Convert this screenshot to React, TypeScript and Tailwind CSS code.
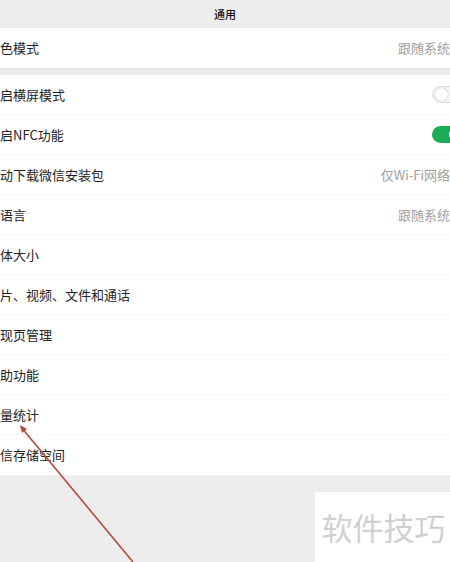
import React from "react";

const font = { fontFamily: '"Noto Sans CJK SC", "Noto Sans", sans-serif' };

const Toggle = ({ on }: { on: boolean }) => (
  <div
    className={`-mr-[14px] flex h-[17px] w-[32px] items-center rounded-full px-[2px] ${
      on ? "justify-end bg-[#1aad55]" : "justify-start border border-[#dcdcdc] bg-[#f3f3f3]"
    }`}
  >
    <div className={`h-[13px] w-[13px] rounded-full bg-white ${on ? "" : "shadow-[0_0_1px_#999]"}`} />
  </div>
);

const rows: { label: string; value?: string; toggle?: boolean }[] = [
  { label: "启横屏模式", toggle: false },
  { label: "启NFC功能", toggle: true },
  { label: "动下载微信安装包", value: "仅Wi-Fi网络" },
  { label: "语言", value: "跟随系统" },
  { label: "体大小" },
  { label: "片、视频、文件和通话" },
  { label: "现页管理" },
  { label: "助功能" },
  { label: "量统计" },
  { label: "信存储空间" },
];

export default function App() {
  return (
    <div className="relative h-[562px] w-[450px] overflow-hidden bg-[#ededed] text-[#222]" style={font}>
      <div className="flex h-[28px] items-center justify-center text-[11px] font-medium text-[#111]">通用</div>

      <div className="flex h-[41px] items-center justify-between border-b border-[#e4e4e4] bg-white text-[13px]">
        <span>色模式</span>
        <span className="whitespace-nowrap text-[13px] text-[#a0a0a0]">跟随系统</span>
      </div>

      <div className="mt-[6px] bg-white">
        {rows.map((r, i) => (
          <div
            key={i}
            className={`flex h-[40px] items-center justify-between text-[13px] ${
              i < rows.length - 1 ? "border-b border-[#f7f7f7]" : ""
            }`}
          >
            <span>{r.label}</span>
            {r.toggle !== undefined && <Toggle on={r.toggle} />}
            {r.value && <span className="whitespace-nowrap text-[13px] text-[#a0a0a0]">{r.value}</span>}
          </div>
        ))}
      </div>

      <div className="mt-[17px] flex justify-end">
        <div className="flex h-[70px] w-[135px] items-center justify-center bg-white pl-[2px] text-[31px] text-[#d0d0d0]">
          软件技巧
        </div>
      </div>

      {/* red arrow */}
      <svg className="absolute left-0 top-0" width="450" height="562">
        <line x1="21" y1="427" x2="133" y2="562" stroke="#b5483c" strokeWidth="1.6" />
        <path d="M20 425 L22 433 L27 429 Z" fill="#b5483c" />
      </svg>
    </div>
  );
}
